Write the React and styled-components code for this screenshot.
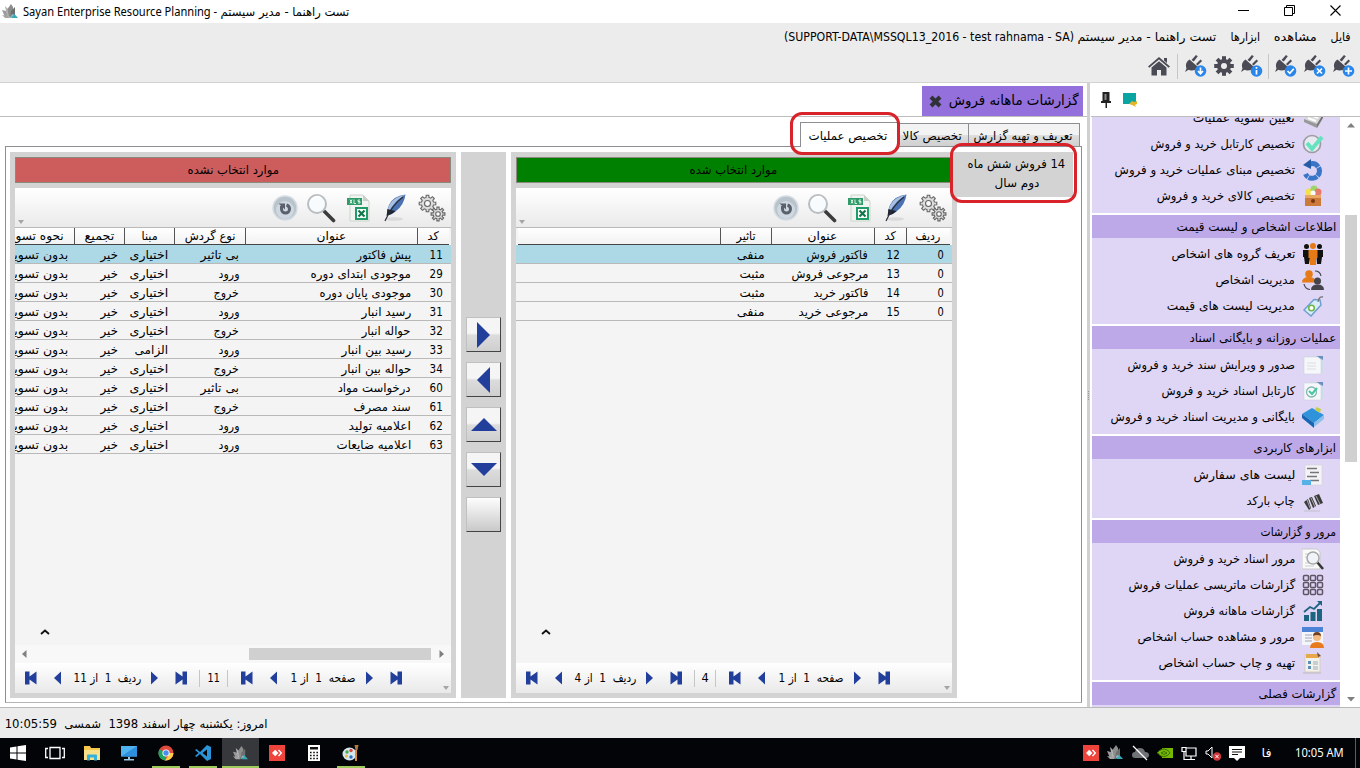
import React, { useLayoutEffect, useRef, useState } from "react";
import styled, { createGlobalStyle, css } from "styled-components";

const Global = createGlobalStyle`
  * { box-sizing: border-box; }
  body { margin: 0; overflow: hidden; background: #fff; }
`;

const App_ = styled.div`
  width: 1360px; height: 768px; position: relative; overflow: hidden;
  display: flex; flex-direction: column; color: #000;
  font-family: "DejaVu Sans Condensed", "DejaVu Sans", sans-serif;
  font-stretch: condensed; font-size: 12px; line-height: 16px;
`;

const FitBox = styled.span`
  display: inline-block; flex: none; white-space: nowrap; height: 16px;
  direction: ${(p) => p.$dir};
  ${(p) => p.$font && css`font-family: ${p.$font};`}
`;
const FitInner = styled.span`
  display: inline-block; white-space: pre;
  transform-origin: ${(p) => (p.$dir === "rtl" ? "right" : "left")} center;
`;
function Fit({ w, dir = "rtl", font, children }) {
  const ref = useRef(null);
  const [scale, setScale] = useState(1);
  useLayoutEffect(() => {
    const natural = ref.current.offsetWidth;
    if (natural) setScale((w + 0.4) / natural);
  }, [w, children]);
  return (
    <FitBox $dir={dir} $font={font} style={{ width: w }}>
      <FitInner ref={ref} $dir={dir} style={{ transform: `scaleX(${scale})` }}>{children}</FitInner>
    </FitBox>
  );
}
const LATIN = '"Noto Sans", "DejaVu Sans", sans-serif';

/* ---------- title bar ---------- */
const TitleBar = styled.header`
  height: 23px; flex: none; display: flex; align-items: center; background: #fff; padding: 0 19px 0 2px; gap: 5px;
`;
const Spacer = styled.div`flex: 1;`;
const WinControls = styled.div`display: flex; gap: 35px; align-items: center; margin-top: -3px;`;
const TitleText = styled.div`display: flex; gap: 4px; margin-top: 1px;`;

const LotusIcon = ({ size = 16 }) => (
  <svg width={size} height={size} viewBox="0 0 16 16">
    <path d="M0 6l4 1 3 7-4-1z" fill="#9a9a9a" />
    <path d="M3 2l4 4 1 8-3-2z" fill="#b0b0b0" />
    <path d="M9 0L5.500 5l1.500 8 4-2V3z" fill="#8d8d8d" />
    <path d="M13 3l-4 4-1 7 5-3z" fill="#6f6f6f" />
    <path d="M0 11l5 1 3 2-5 0z" fill="#a5a5a5" />
    <path d="M9 14l3-4.500 4 4.500z" fill="#35aab8" />
    <path d="M8 14l2-4 2 1z" fill="#9ab8bc" />
  </svg>
);

/* ---------- menu ---------- */
const Ribbon = styled.div`
  height: 60px; flex: none; background: #ececec; border-bottom: 1px solid #d2d2d2;
`;
const MenuRow = styled.nav`
  height: 28px; display: flex; flex-direction: row; direction: rtl; align-items: center; padding-right: 9px; gap: 14px;
`;
const MenuCaption = styled.div`display: flex; direction: rtl; gap: 4px; margin-right: 1px;`;
const Tools = styled.div`
  height: 30px; display: flex; align-items: center; justify-content: flex-end; padding-right: 5px; gap: 7px;
`;
const Divider = styled.i`
  width: 1px; height: ${(p) => p.$h || 25}px; background: ${(p) => p.$c || "#c6c6c6"}; flex: none; margin: ${(p) => p.$m || "0"};
`;

const Plug = ({ kind }) => (
  <svg width="22" height="23" viewBox="0 0 22 23">
    <g fill="#4b4b55">
      <path d="M4.500 4.500L13 12Q11 15.500 6.500 15.500q-2 0-3-.8L0 17l1.500-3.500Q-.5 8 4.500 4.500z" />
      <path d="M6.500 5L11 0l1.800 1.300-4 5.200zM11 9l4.500-4.500 1.600 1.600-4.600 4.400z" />
    </g>
    <circle cx="15.500" cy="16" r="5.800" fill="#2b86ea" />
    <g stroke="#fff" strokeWidth="1.700" fill="none">
      {kind === "plus" && <path d="M15.500 12.500v7M12 16h7" />}
      {kind === "x" && <path d="M13 13.500l5 5M18 13.500l-5 5" />}
      {kind === "check" && <path d="M12.500 16l2.300 2.300 4-4.600" />}
      {kind === "info" && <path d="M15.500 15v4.500M15.500 12v1.800" />}
      {kind === "down" && <path d="M15.500 12.500v6M13 16l2.500 2.800L18 16" />}
    </g>
  </svg>
);
const HomeIcon = () => (
  <svg width="22" height="20" viewBox="0 0 22 20" fill="#4b4b55">
    <path d="M0 10.500L11 1l11 9.500-1.300 1.300L11 3.600 1.300 11.800z" />
    <path d="M3.500 11.500L11 5.200l7.500 6.300V19.500h-5.500v-5.500H9v5.500H3.500zM16 2h3v5l-3-2.500z" />
  </svg>
);
const GearIcon = () => (
  <svg width="20" height="20" viewBox="-10 -10 20 20">
    {[0, 45, 90, 135].map((a) => (
      <rect key={a} x="-2" y="-9.800" width="4" height="19.600" fill="#4b4b55" transform={`rotate(${a})`} />
    ))}
    <circle r="7" fill="#4b4b55" /><circle r="3" fill="#ececec" />
  </svg>
);

/* ---------- main area ---------- */
const Body = styled.div`flex: none; height: 625px; display: flex; border-bottom: 1px solid #b9b9b9;`;
const Work = styled.main`width: 1087px; display: flex; flex-direction: column;`;
const DocTabs = styled.div`
  height: 34px; flex: none; display: flex; justify-content: flex-end; align-items: flex-end;
  border-bottom: 1px solid #bdbdbd; padding-right: 4px;
`;
const DocTab = styled.div`
  width: 161px; height: 30px; background: #9370db; display: flex; align-items: center; justify-content: flex-end;
  gap: 7px; padding: 0 4px 3px 0; font-size: 14px;
`;
const CloseGlyph = styled.svg`margin-top: 3px;`;
const PageTabs = styled.div`
  height: 29px; flex: none; display: flex; direction: rtl; align-items: flex-end; padding-right: 7px;
`;
const PageTab = styled.div`
  width: ${(p) => p.$w}px; height: ${(p) => (p.$on ? 25 : 23)}px; border: 1px solid #8c8e94; border-bottom: 0;
  margin-left: ${(p) => (p.$on ? 0 : -1)}px;
  background: ${(p) => (p.$on ? "#fff" : "linear-gradient(#f3f3f3 0 48%, #dedede 52%, #cfcfcf)")};
  display: flex; align-items: center; justify-content: center; position: relative; top: ${(p) => (p.$on ? 1 : 0)}px;
  padding: 1px 2px 0 0;
`;
const Page = styled.section`
  margin: 0 5px 4px 5px; flex: 1; border: 1px solid #8c8e94; border-bottom-color: #b5b5b5;
  padding: 5px 4px 4px; display: flex; gap: 5px; background: #fff;
`;
const Panel = styled.div`
  width: 446px; background: #d3d3d3; padding: 5px; display: flex; flex-direction: column; flex: none;
`;
const PanelTitle = styled.div`
  height: 26px; flex: none; margin-bottom: 5px; border: 1px solid #8a8a7e; background: ${(p) => p.$bg};
  display: flex; align-items: center; justify-content: center;
`;
const PanelTools = styled.div`
  height: 40px; flex: none; background: linear-gradient(#fff, #eaeaea); border-bottom: 1px solid #b9b9b9;
  display: flex; align-items: center; justify-content: flex-end; padding: 0 5px 0 3px;
`;
const Tool = styled.span`display: flex; margin-left: ${(p) => p.$m}px;`;
const SmallArrow = styled.i`
  width: 0; height: 0; border: 3px solid transparent; border-top: 4px solid #a5a5a5; border-bottom: 0;
  align-self: flex-end; margin: ${(p) => p.$m || "0 auto 3px 0"};
`;
const Grid = styled.div`flex: 1; background: #f4f4f4; display: flex; flex-direction: column; min-height: 0;`;
const HeadRow = styled.div`
  height: 17px; flex: none; display: flex; direction: rtl; margin: 0 2px 0 ${(p) => p.$ml}px;
  background: linear-gradient(#fff, #f2f2f2); border-bottom: 1px solid #454545; overflow: hidden;
`;
const HeadCell = styled.div`
  ${(p) => (p.$w ? css`width: ${p.$w}px; border-left: 1px solid #555;` : css`flex: 1;`)}
  flex-shrink: 0; height: 16px; display: flex; justify-content: ${(p) => (p.$w ? "center" : "flex-start")};
  padding-right: ${(p) => (p.$w ? 0 : 10)}px; min-width: 0;
`;
const Row = styled.div`
  height: 19px; flex: none; display: flex; direction: rtl; align-items: center; overflow: hidden;
  border-bottom: 1px solid #b9b9b9; background: ${(p) => (p.$on ? "#add8e6" : "transparent")};
`;
const Cell = styled.div`
  ${(p) => (p.$w ? css`width: ${p.$w}px;` : css`flex: 1;`)}
  flex-shrink: 0; min-width: 0; display: flex; padding-right: ${(p) => (p.$first ? 8 : 6)}px;
  padding-top: 1px;
`;
const Up = styled.svg`margin: auto 0 ${(p) => p.$b}px 25px; flex: none;`;
const HScroll = styled.div`
  height: 18px; flex: none; background: #f8f8f8; display: flex; align-items: center; padding: 0 7px;
`;
const HThumb = styled.div`width: 182px; height: 12px; background: #d0d0d0; margin: 0 8px 0 auto;`;
const Pager = styled.div`
  height: 30px; flex: none; background: linear-gradient(#fff, #e9e9e9); display: flex; align-items: center;
  padding-left: 10px;
`;
const PagerItem = styled.span`display: flex; margin: 0 ${(p) => p.$r}px 0 ${(p) => p.$l || 0}px;`;
const Mover = styled.div`
  width: 45px; background: #d3d3d3; display: flex; flex-direction: column; align-items: center;
  padding-top: 165px; gap: 10px; flex: none;
`;
const MoveButton = styled.button`
  width: 35px; height: 35px; padding: 0; border: 1px solid #c0c0c0; border-right-color: #444; border-bottom-color: #444;
  background: linear-gradient(${(p) => (p.$blank ? "#fdfdfd, #c9c9c9" : "#f5f5f5 0 46%, #dcdcdc 52%, #cfcfcf")});
  display: flex; align-items: center; justify-content: center;
`;
const ReportItem = styled.div`
  width: 116px; flex: none; height: 45px; margin-left: -5px; background: #d3d3d3; display: flex; flex-direction: column;
  align-items: flex-end; gap: 3px; padding: 4px 8px 0 0; direction: ltr;
`;
const SecondLine = styled.span`display: flex; margin-right: 26px;`;

const BLUE = "#223f9b";
const Nav = ({ kind }) => {
  const edge = kind === "first" || kind === "last";
  return (
    <svg width={edge ? 12 : 8} height="14" viewBox={edge ? "0 0 12 14" : "0 0 8 14"} fill={BLUE}>
      {kind === "first" && <path d="M0 .5h4.500v5L11.500 .5v13L4.500 8.500v5H0z" />}
      {kind === "last" && <path d="M12 .5H7.500v5L.5 .5v13l7-5v5H12z" />}
      {kind === "prev" && <path d="M7 .5v13L0 7z" />}
      {kind === "next" && <path d="M1 .5v13L8 7z" />}
    </svg>
  );
};

const Cog = ({ x, y, r, n }) => {
  const pts = [];
  for (let i = 0; i < n; i++) {
    [[-0.3, r], [-0.2, r + 2.2], [0.2, r + 2.2], [0.3, r]].forEach(([o, d]) => {
      const a = ((i + o) * 2 * Math.PI) / n;
      pts.push(`${(Math.cos(a) * d).toFixed(2)},${(Math.sin(a) * d).toFixed(2)}`);
    });
  }
  return (
    <g transform={`translate(${x} ${y})`} stroke="#666" strokeWidth="1.100">
      <polygon points={pts.join(" ")} fill="#dcdcdc" />
      <circle r={r * 0.48} fill="#fafafa" />
    </g>
  );
};
const PanelToolbar = () => (
  <PanelTools>
    <SmallArrow />
    <Tool>
      <svg width="26" height="26" viewBox="0 0 26 26">
        <circle cx="13" cy="13" r="12" fill="#b9c3cc" stroke="#d5dce2" strokeWidth="1.500" />
        <circle cx="13" cy="15" r="9" fill="#cfd8e0" />
        <path d="M9.500 11v3a4 4 0 0 0 8 0q0-3-3-4" fill="none" stroke="#59616c" strokeWidth="3" />
        <path d="M6.500 8.500h6.500v6z" fill="#59616c" />
      </svg>
    </Tool>
    <Tool $m={8}>
      <svg width="30" height="30" viewBox="0 0 30 30">
        <path d="M18.500 18.500l9 9" stroke="#3b3b3b" strokeWidth="3.600" strokeLinecap="round" />
        <circle cx="11" cy="11" r="9" fill="#f8fbfd" stroke="#b9bec2" strokeWidth="2" />
        <path d="M6 7q4-5 9-2" stroke="#fff" strokeWidth="2" fill="none" />
      </svg>
    </Tool>
    <Tool $m={11}>
      <svg width="24" height="28" viewBox="0 0 24 28">
        <path d="M3 1h13l6 6v20H3z" fill="#f1f4f1" stroke="#cdd4cd" />
        <path d="M16 1v6h6z" fill="#c9cfc9" />
        <rect x="0" y="4" width="15" height="7" fill="#2f9b68" />
        <path d="M3 5.500l2 4m0-4l-2 4M7 5.500v4h2M13 6h-2v1.500h2v1.500h-2" stroke="#d9f0e3" fill="none" />
        <rect x="8" y="13" width="13" height="13" fill="#1f9c68" />
        <rect x="10" y="15" width="9" height="9" fill="#fff" />
        <path d="M11.500 16.500l6 6M17.500 16.500l-6 6" stroke="#13764a" strokeWidth="2.200" />
      </svg>
    </Tool>
    <Tool $m={12}>
      <svg width="24" height="30" viewBox="0 0 24 30">
        <ellipse cx="11" cy="26" rx="9" ry="1.800" fill="#dadada" />
        <path d="M22.500 1.500Q10 3 6 12q-2.500 5-2 10 5 0 9-4 8-6 9.500-16.500z" fill="#4a72b2" />
        <path d="M22 2Q12 7 5 20q-1-4 2-9Q11 4 22 2z" fill="#a9c0e0" />
        <path d="M4.500 16Q4 20 3.500 23q5-1 9-5-5-1-8-2z" fill="#20242e" />
        <path d="M20 4Q9 12 2 28" stroke="#2a2f3c" fill="none" strokeWidth="1.200" />
      </svg>
    </Tool>
    <Tool $m={11}>
      <svg width="28" height="28" viewBox="0 0 28 28">
        <Cog x={9.5} y={9.5} r={6.2} n={8} />
        <Cog x={20} y={20} r={4.8} n={8} />
      </svg>
    </Tool>
  </PanelTools>
);

const UpMark = ({ b }) => (
  <Up $b={b} width="10" height="6" viewBox="0 0 10 6"><path d="M1 5l4-3.500L9 5" fill="none" stroke="#111" strokeWidth="1.800" /></Up>
);

function DataGrid({ columns, rows, ml, markBottom }) {
  return (
    <Grid>
      <HeadRow $ml={ml}>
        {columns.map((c, i) => (
          <HeadCell key={i} $w={c.w && (i === 0 ? c.w - 2 : c.w)}>{c.t && <Fit w={c.tw}>{c.t}</Fit>}</HeadCell>
        ))}
      </HeadRow>
      {rows.map((r, ri) => (
        <Row key={ri} $on={ri === 0}>
          {r.map(([t, w], ci) => (
            <Cell key={ci} $w={columns[ci].w} $first={ci === 0}>{t && <Fit w={w}>{t}</Fit>}</Cell>
          ))}
        </Row>
      ))}
      <UpMark b={markBottom} />
    </Grid>
  );
}

const Y = ["اختیاری", 38], N = ["خیر", 17], B = ["بدون تسویه", 60];
const IN = ["ورود", 20], OUT = ["خروج", 25], NONE = ["بی تاثیر", 38];
const leftColumns = [
  { t: "کد", tw: 11, w: 34 }, { t: "عنوان", tw: 29, w: 172 }, { t: "نوع گردش", tw: 51, w: 71 },
  { t: "مبنا", tw: 16, w: 50 }, { t: "تجمیع", tw: 29, w: 50 }, { t: "نحوه تسویه", tw: 58 },
];
const leftRows = [
  ["11", "پیش فاکتور", 54, NONE], ["29", "موجودی ابتدای دوره", 100, IN], ["30", "موجودی پایان دوره", 91, OUT],
  ["31", "رسید انبار", 49, IN], ["32", "حواله انبار", 49, OUT], ["33", "رسید بین انبار", 69, IN, ["الزامی", 33]],
  ["34", "حواله بین انبار", 69, OUT], ["60", "درخواست مواد", 73, NONE], ["61", "سند مصرف", 57, OUT],
  ["62", "اعلامیه تولید", 62, IN], ["63", "اعلامیه ضایعات", 74, IN],
].map(([c, t, w, k, y]) => [[c, 13], [t, w], k, y || Y, N, B]);
const rightColumns = [
  { t: "ردیف", tw: 24, w: 46 }, { t: "کد", tw: 11, w: 32 }, { t: "عنوان", tw: 29, w: 103 }, { t: "تاثیر", tw: 19, w: 51 }, {},
];
const rightRows = [
  [["0", 6], ["12", 13], ["فاکتور فروش", 61], ["منفی", 28], ["", 0]],
  [["0", 6], ["13", 13], ["مرجوعی فروش", 76], ["مثبت", 25], ["", 0]],
  [["0", 6], ["14", 13], ["فاکتور خرید", 54], ["مثبت", 25], ["", 0]],
  [["0", 6], ["15", 13], ["مرجوعی خرید", 69], ["منفی", 28], ["", 0]],
];

function PagerBar({ total, rowText, rowW, totalW, totalGap }) {
  return (
    <Pager>
      <PagerItem $r={17}><Nav kind="first" /></PagerItem>
      <PagerItem $r={12}><Nav kind="prev" /></PagerItem>
      <PagerItem $r={9}><Fit w={rowW}>{rowText}</Fit></PagerItem>
      <PagerItem $r={17}><Nav kind="next" /></PagerItem>
      <PagerItem $r={12}><Nav kind="last" /></PagerItem>
      <Divider $h={17} />
      <PagerItem $l={totalGap} $r={totalGap - 1}><Fit w={totalW}>{total}</Fit></PagerItem>
      <Divider $h={17} />
      <PagerItem $l={13} $r={17}><Nav kind="first" /></PagerItem>
      <PagerItem $r={12}><Nav kind="prev" /></PagerItem>
      <PagerItem $r={10}><Fit w={65}>{"صفحه  1  از 1"}</Fit></PagerItem>
      <PagerItem $r={17}><Nav kind="next" /></PagerItem>
      <PagerItem $r={0}><Nav kind="last" /></PagerItem>
      <SmallArrow $m="0 2px 3px auto" />
    </Pager>
  );
}

/* ---------- sidebar ---------- */
const Splitter = styled.div`width: 4px; background: #d0d0d0; border-right: 1px solid #fff; display: flex; align-items: center;`;
const Grip = styled.i`width: 1px; height: 9px; border-left: 1px dotted #999; margin-left: 1px;`;
const Side = styled.aside`flex: 1; display: flex; flex-direction: column; min-height: 0;`;
const SideHead = styled.div`
  height: 34px; flex: none; border-bottom: 1px solid #bdbdbd; display: flex; align-items: center; gap: 12px; padding-left: 10px;
`;
const SideBody = styled.div`flex: 1; display: flex; min-height: 0; padding-left: 1px;`;
const Groups = styled.div`width: 248px; overflow: hidden; display: flex; flex-direction: column;`;
const Group = styled.div`flex: none; margin-top: ${(p) => p.$mt ?? 2}px;`;
const GroupHead = styled.div`
  height: 23px; background: #bea9e8; direction: rtl; display: flex; align-items: center; padding: 1px 4px 0 0;
`;
const GroupItems = styled.div`background: #dfd5f4; padding: 3px 0 4.3px;`;
const SideItem = styled.div`
  height: 26px; direction: rtl; display: flex; align-items: center; padding-right: 16px; gap: 7px;
`;
const VScroll = styled.div`
  width: 20px; display: flex; flex-direction: column; align-items: center; padding: 6px 0 5px 2px; flex: none;
`;
const VThumb = styled.div`width: 12px; height: 247px; background: #d0d0d0; margin-top: 87px;`;

const pic = {
  keys: <><path d="M2 12L8 4l13 3-6 10z" fill="#d6d6d6" /><path d="M2 12l13 5v4L2 15z" fill="#999" /><path d="M6 11l8 3M8 8l8 3" stroke="#fff" strokeWidth="2" /><path d="M15 17l6-10v4l-6 10z" fill="#777" /></>,
  check: <><circle cx="10" cy="11" r="8.500" fill="#e9e9f1" stroke="#9c9ca4" strokeWidth="1.700" /><path d="M5 10l5 6L20 4" stroke="#64e3c0" strokeWidth="4" fill="none" /></>,
  cycle: <><path d="M8 5a7.300 7.300 0 1 1-4.500 10" stroke="#3a76c8" strokeWidth="5" fill="none" strokeDasharray="9 .7" /><path d="M1 6L9 0v10z" fill="#245ca8" /></>,
  box: <><circle cx="7" cy="7" r="3.500" fill="#f4e04d" /><circle cx="12" cy="4" r="3.500" fill="#9cd56a" /><circle cx="16" cy="7" r="3.500" fill="#e67b6c" /><circle cx="11" cy="8" r="2.500" fill="#fff" /><rect x="3" y="10" width="16" height="11" fill="#cc7a3c" /><rect x="3" y="10" width="16" height="3" fill="#e9a764" /><circle cx="11" cy="16" r="2" fill="#7c3513" /></>,
  people: <><g fill="#111"><circle cx="4.500" cy="3.500" r="2.500" /><path d="M1 7h7v7l-1 7H3l-1-7H1z" /><circle cx="17.500" cy="3.500" r="2.500" /><path d="M14 7h7v7h-1l-1 7h-4z" /></g><g fill="#e67a17"><circle cx="11" cy="3" r="3" /><path d="M6.500 7h9v8h-1.500v7H8v-7H6.500z" /></g></>,
  swap: <><g fill="#e67a17"><circle cx="7" cy="5" r="3.800" /><path d="M0 13.500q0-5.500 7-5.500t6 5.500z" /></g><g fill="#44444c"><circle cx="15.500" cy="12" r="3.500" /><path d="M9 21q0-5.500 6.500-5.500T22 21z" /></g><path d="M13 2q5 0 6 5M2 15q1 5 6 5.500" stroke="#44444c" fill="none" strokeWidth="1.200" /></>,
  tag: <><path d="M2 15L12 4.500l6 .5 1 5-10 11z" fill="#d9ecfa" stroke="#6e9fd0" strokeWidth="1.500" /><circle cx="9.500" cy="13" r="2.800" fill="#fff" stroke="#69b644" strokeWidth="1.500" /><path d="M16 7q1-6 5-5" stroke="#777" fill="none" strokeWidth="1.300" /></>,
  docs: <><path d="M6 2h13l2 3v14H6z" fill="#cddcec" /><path d="M14 2h7v4z" fill="#6c90bd" /><path d="M2 3h14l3 3v14H2z" fill="#f5f7fa" stroke="#ccd3dc" strokeWidth=".6" /><path d="M5 9h9M5 12h9M5 15h9" stroke="#ddd" /></>,
  docCheck: <><path d="M6 2h13l2 3v14H6z" fill="#cddcec" /><path d="M14 2h7v4z" fill="#6c90bd" /><path d="M2 3h14l3 3v14H2z" fill="#f5f7fa" stroke="#ccd3dc" strokeWidth=".6" /><circle cx="9.500" cy="12" r="5" fill="none" stroke="#83b6b0" strokeWidth="1.300" /><path d="M7 11l3 3 5-6" fill="none" stroke="#45c79f" strokeWidth="2" /></>,
  book: <><path d="M0 8L10 2l12 7-10 8z" fill="#2f93dc" /><path d="M0 8l12 9v5L0 12z" fill="#1666b4" /><path d="M12 17l10-8v4l-10 8z" fill="#8cc0ea" /><path d="M14 1l5 2-1 4-5-3z" fill="#c4cf4a" /></>,
  list: <><path d="M3 1h17v20H3z" fill="#f4f4f6" stroke="#d4d4dc" strokeWidth=".7" /><path d="M5 4.500h10M8 8.500h9M5 12.500h10M8 16.500h9" stroke="#75757b" strokeWidth="1.700" /><rect x="0" y="16" width="9" height="5" fill="#58b1e6" /></>,
  barcode: <><path d="M2 12l4-3 3 9-2 2zM7 8l3-1 4 9-3 2zM12 6l5-2 4 9-5 2z" fill="#3a3a3a" /><path d="M9 8l4 9M14 6l4 8M5 10l3 8" stroke="#aaa" /><path d="M2 21h16" stroke="#c4bfce" /></>,
  lens: <><path d="M0 1h15l3 3v17H0z" fill="#fafafa" stroke="#c9c9c9" /><path d="M3 6h9M3 9h9M3 15h9M3 18h9" stroke="#ccc" /><path d="M15 14l6 7" stroke="#333" strokeWidth="2.500" /><circle cx="11" cy="10" r="6" fill="#f0f4f8" stroke="#a6a6a6" strokeWidth="1.500" /></>,
  matrix: <g fill="none" stroke="#5e5666" strokeWidth="1.500">{[1.5, 8.5, 15.5].map((y) => [1.5, 8.5, 15.5].map((x) => <rect key={x + "-" + y} x={x} y={y} width="5" height="5" rx="1" />))}</g>,
  chart: <g fill="#1c6480"><path d="M2 15h5v6H2zM8.500 12h5v9h-5zM15 9h5v12h-5z" /><path d="M2 12l6-5 4 2 6-6" stroke="#1c6480" strokeWidth="1.800" fill="none" /><path d="M15 1h5v5z" /></g>,
  account: <><rect x="0" y="1" width="21" height="18" fill="#f3f5fa" /><rect x="0" y="1" width="21" height="5" fill="#4d83d6" /><path d="M3 9h7M3 12h7M3 15h7" stroke="#a2a7b4" /><circle cx="15" cy="11" r="4" fill="#f2bb82" /><path d="M11 10q0-4 4-4t4 4q-4-2-8 0z" fill="#704020" /><path d="M8 22q0-6 7-6t7 6z" fill="#e77b1d" /></>,
  print: <><path d="M3 3h15v17H3z" fill="#f3f1ea" stroke="#d2cfc5" /><path d="M4 2h13v4H4z" fill="#e7a94b" /><path d="M15 0l4 4-3 1z" fill="#6e5044" /><path d="M6 9h3v3H6zM6 14h3v3H6z" fill="#5c90b4" /><path d="M11 10h5M11 12h5M11 15h5M11 17h5" stroke="#98afbb" /><path d="M1 21h18" stroke="#bbb" /></>,
};
const Pic = ({ n }) => <svg width="22" height="22" viewBox="0 0 22 22">{pic[n]}</svg>;

const groups = [
  { items: [["keys", "تعیین تسویه عملیات", 102], ["check", "تخصیص کارتابل خرید و فروش", 144], ["cycle", "تخصیص مبنای عملیات خرید و فروش", 180], ["box", "تخصیص کالای خرید و فروش", 138]] },
  { head: ["اطلاعات اشخاص و لیست قیمت", 159], items: [["people", "تعریف گروه های اشخاص", 123], ["swap", "مدیریت اشخاص", 79], ["tag", "مدیریت لیست های قیمت", 128]] },
  { head: ["عملیات روزانه و بایگانی اسناد", 146], items: [["docs", "صدور و ویرایش سند خرید و فروش", 167], ["docCheck", "کارتابل اسناد خرید و فروش", 133], ["book", "بایگانی و مدیریت اسناد خرید و فروش", 184]] },
  { head: ["ابزارهای کاربردی", 82], items: [["list", "لیست های سفارش", 101], ["barcode", "چاپ بارکد", 48]] },
  { head: ["مرور و گزارشات", 75], items: [["lens", "مرور اسناد خرید و فروش", 121], ["matrix", "گزارشات ماتریسی عملیات فروش", 166], ["chart", "گزارشات ماهانه فروش", 111], ["account", "مرور و مشاهده حساب اشخاص", 157], ["print", "تهیه و چاپ حساب اشخاص", 136]] },
  { head: ["گزارشات فصلی", 77], items: [] },
];

/* ---------- status + taskbar ---------- */
const Status = styled.div`height: 30px; flex: none; background: #ececec; display: flex; align-items: center; padding: 1px 0 0 5px;`;
const Taskbar = styled.footer`height: 30px; flex: none; background: #020408; display: flex; color: #fff;`;
const TaskList = styled.div`display: flex; margin-left: -0.4px;`;
const TaskButton = styled.div`
  width: 37px; height: 30px; display: flex; align-items: center; justify-content: center; flex: none;
  background: ${(p) => (p.$on ? "#37383c" : "none")};
`;
const TaskInner = styled.div`
  width: ${(p) => (p.$full ? 37 : 28)}px; height: 30px; display: flex; align-items: center; justify-content: center;
  border-bottom: 2px solid ${(p) => (p.$run ? "#9ccb5c" : "transparent")}; padding-top: 2px;
`;
const Tray = styled.div`display: flex; align-items: center; gap: 8px; padding-right: 4px;`;
const Clock = styled.div`display: flex; margin: -1px 12px 0 16px;`;
const Lang = styled.div`display: flex; margin-left: 9px;`;

const AnyDesk = () => (
  <svg width="16" height="16" viewBox="0 0 16 16"><rect width="16" height="16" fill="#ef443b" /><path d="M3 8l3.200-3.200L9.400 8l-3.200 3.200z" fill="#fff" /><path d="M9.500 5L12.300 8l-2.800 3" stroke="#fff" fill="none" strokeWidth="1.400" /></svg>
);
const S = ({ children, w = 18 }) => <svg width={w} height="18" viewBox={`0 0 ${w} 18`}>{children}</svg>;
const tasks = [
  { icon: <S><path d="M1 3.500l6.500-1v6H1zM8.500 2.300L17 1v7.500H8.500zM1 9.500h6.500v6L1 14.500zM8.500 9.500H17V17l-8.500-1.300z" fill="#fff" /></S> },
  { icon: <S w={20}><path d="M5 3.500h10v11H5zM3 4.500H.7v9H3M17 4.500h2.300v9H17" fill="none" stroke="#fff" strokeWidth="1.300" /></S> },
  { icon: <S><path d="M1 2h6l1 2h9v12H1z" fill="#f5c84c" /><path d="M1 6h16v10H1z" fill="#fbe08a" /><path d="M4 16.500v-5q0-1 1-1h8q1 0 1 1v5h-3v-3H7v3z" fill="#33b1dd" /></S> },
  { icon: <S><rect x="1" y="2" width="16" height="10.500" fill="#4fb3f2" /><path d="M1 12.500L17 2v10.500z" fill="#2e8fdc" /><path d="M8 13h2v2H8zM4 15h10v1.500H4z" fill="#9cc8e6" /></S> },
  { run: 1, icon: <S><circle cx="9" cy="9" r="7.500" fill="#dd4b3e" /><path d="M9 9L2.500 5.200A7.500 7.500 0 0 0 9 16.500z" fill="#1da462" /><path d="M9 9h7.500A7.500 7.500 0 0 1 8 16.400l4-6z" fill="#ffcd46" /><circle cx="9" cy="9" r="3.600" fill="#fff" /><circle cx="9" cy="9" r="2.700" fill="#4b8bf4" /></S> },
  { run: 1, icon: <S><path d="M13 1l4 2v12l-4 2-7-7-3.500 3L1 12l3.500-3L1 6l1.500-1L6 8zM13 5.500L8.500 9l4.500 3.500z" fill="#2b93d8" fillRule="evenodd" /></S> },
  { run: 1, on: 1, icon: <LotusIcon size={15} /> },
  { icon: <AnyDesk /> },
  { icon: <S><rect x="3" y="1" width="12" height="16" fill="#fff" /><path d="M5 3h8v2.500H5z" fill="#111" /><path d="M5 8.500h8M5 11.500h8M5 14.500h8" stroke="#111" strokeWidth="1.600" strokeDasharray="1.600 1.600" /></S> },
  { run: 1, icon: <S><ellipse cx="7.500" cy="10" rx="7" ry="6.500" fill="#d5e6ef" /><circle cx="5" cy="8" r="1.700" fill="#4aa84a" /><circle cx="9" cy="6.500" r="1.700" fill="#d9483b" /><circle cx="4.500" cy="12" r="1.500" fill="#e9b93a" /><circle cx="9" cy="13" r="1.700" fill="#2e6fc0" /><path d="M14 6v11" stroke="#d98a3c" strokeWidth="2" /><path d="M12.500 1h4l-1 5h-2z" fill="#b0793e" /></S> },
];

/* ---------- highlight rings ---------- */
const Ring = styled.div`
  position: absolute; left: ${(p) => p.$x}px; top: ${(p) => p.$y}px; width: ${(p) => p.$w}px; height: ${(p) => p.$h}px;
  border: 3px solid #d8232a; border-radius: 12px;
`;

export default function App() {
  return (
    <App_>
      <Global />
      <TitleBar>
        <LotusIcon />
        <TitleText>
          <Fit w={194} dir="ltr" font={LATIN}>{"Sayan Enterprise Resource Planning -"}</Fit>
          <Fit w={128}>تست راهنما - مدیر سیستم</Fit>
        </TitleText>
        <Spacer />
        <WinControls>
          <svg width="11" height="11"><path d="M0 5.500h11" stroke="#000" /></svg>
          <svg width="11" height="11" fill="none" stroke="#000"><path d="M.5 2.500h8v8h-8zM2.500 2.500v-2h8v8h-2" /></svg>
          <svg width="11" height="11"><path d="M.5.500l10 10M10.500.500l-10 10" stroke="#000" strokeWidth="1.100" /></svg>
        </WinControls>
      </TitleBar>

      <Ribbon>
        <MenuRow>
          <Fit w={20}>فایل</Fit>
          <Fit w={43}>مشاهده</Fit>
          <Fit w={29}>ابزارها</Fit>
          <MenuCaption>
            <Fit w={138}>تست راهنما - مدیر سیستم</Fit>
            <Fit w={290} dir="ltr">{"(SUPPORT-DATA\\MSSQL13_2016 - test rahnama - SA)"}</Fit>
          </MenuCaption>
        </MenuRow>
        <Tools>
          <HomeIcon />
          <Divider />
          <Plug kind="down" />
          <GearIcon />
          <Plug kind="info" />
          <Divider $m="0 -1px 0 -2px" />
          <Plug kind="check" />
          <Plug kind="x" />
          <Plug kind="plus" />
        </Tools>
      </Ribbon>

      <Body>
        <Work>
          <DocTabs>
            <DocTab>
              <CloseGlyph width="13" height="13" viewBox="0 0 13 13"><path d="M2 2l9 9M11 2l-9 9" stroke="#303038" strokeWidth="4" /></CloseGlyph>
              <Fit w={130}>گزارشات ماهانه فروش</Fit>
            </DocTab>
          </DocTabs>
          <PageTabs>
            <PageTab $w={112}><Fit w={98}>تعریف و تهیه گزارش</Fit></PageTab>
            <PageTab $w={71}><Fit w={59}>تخصیص کالا</Fit></PageTab>
            <PageTab $w={99} $on><Fit w={78}>تخصیص عملیات</Fit></PageTab>
          </PageTabs>
          <Page>
            <Panel>
              <PanelTitle $bg="#cd5c5c"><Fit w={91}>موارد انتخاب نشده</Fit></PanelTitle>
              <PanelToolbar />
              <DataGrid columns={leftColumns} rows={leftRows} ml={0} markBottom={10} />
              <HScroll>
                <svg width="5" height="8"><path d="M4.500 0v8L0 4z" fill="#808080" /></svg>
                <HThumb />
                <svg width="5" height="8"><path d="M.5 0v8L5 4z" fill="#808080" /></svg>
              </HScroll>
              <PagerBar total="11" totalW={12} totalGap={8} rowText={"ردیف  1  از 11"} rowW={67} />
            </Panel>
            <Mover>
              <MoveButton><svg width="14" height="26"><path d="M0 0v26L13 13z" fill={BLUE} /></svg></MoveButton>
              <MoveButton><svg width="14" height="26"><path d="M13 0v26L0 13z" fill={BLUE} /></svg></MoveButton>
              <MoveButton><svg width="26" height="14"><path d="M0 13h26L13 0z" fill={BLUE} /></svg></MoveButton>
              <MoveButton><svg width="26" height="14"><path d="M0 0h26L13 13z" fill={BLUE} /></svg></MoveButton>
              <MoveButton $blank />
            </Mover>
            <Panel>
              <PanelTitle $bg="#008000"><Fit w={87}>موارد انتخاب شده</Fit></PanelTitle>
              <PanelToolbar />
              <DataGrid columns={rightColumns} rows={rightRows} ml={2} markBottom={28} />
              <PagerBar total="4" totalW={7} totalGap={7} rowText={"ردیف  1  از 4"} rowW={61} />
            </Panel>
            <ReportItem>
              <Fit w={97}>14 فروش شش ماه</Fit>
              <SecondLine><Fit w={44}>دوم سال</Fit></SecondLine>
            </ReportItem>
          </Page>
        </Work>
        <Splitter><Grip /></Splitter>
        <Side>
          <SideHead>
            <svg width="10" height="16" viewBox="0 0 10 16"><path d="M1.500 0h7v9H10v2H6v5H4.500v-5H0V9h1.500z" fill="#222" /><path d="M3.500 2h2v6h-2z" fill="#8a8a8a" /></svg>
            <svg width="15" height="15" viewBox="0 0 15 15"><path d="M0 1h13v11H0z" fill="#0aa5a0" /><path d="M6 12l3-3 2 1 3-1v3l-2 1 1 2-4-2z" fill="#e4b429" /></svg>
          </SideHead>
          <SideBody>
            <Groups>
              {groups.map((g, i) => (
                <Group key={i} $mt={i === 0 ? -15 : 2}>
                  {g.head && <GroupHead><Fit w={g.head[1]}>{g.head[0]}</Fit></GroupHead>}
                  <GroupItems>
                    {g.items.map(([n, t, w]) => (
                      <SideItem key={n}><Pic n={n} /><Fit w={w}>{t}</Fit></SideItem>
                    ))}
                  </GroupItems>
                </Group>
              ))}
            </Groups>
            <VScroll>
              <svg width="8" height="5"><path d="M0 4.500h8L4 0z" fill="#808080" /></svg>
              <VThumb />
              <Spacer />
              <svg width="8" height="5"><path d="M0 0h8L4 4.500z" fill="#808080" /></svg>
            </VScroll>
          </SideBody>
        </Side>
      </Body>

      <Status><Fit w={263}>{"امروز: یکشنبه چهار اسفند 1398  شمسی  10:05:59"}</Fit></Status>

      <Taskbar>
        <TaskList>
          {tasks.map((t, i) => (
            <TaskButton key={i} $on={t.on}><TaskInner $run={t.run} $full={t.on}>{t.icon}</TaskInner></TaskButton>
          ))}
        </TaskList>
        <Spacer />
        <Tray>
          <AnyDesk />
          <LotusIcon />
          <S><path d="M4 14q-3 0-3-3t3-3q1-4 5-4t5 4q4 0 4 3t-3 3z" fill="#6f7378" /><path d="M2 2l14 14" stroke="#fff" strokeWidth="1.300" /></S>
          <S w={16}><path d="M5 4h11v10H5z" fill="#76b900" /><path d="M0 9q5-6 10-3 2 1 3 3-4 5-9 3-2-1-3-3zm4 0q3-3 6 0-3 3-6 0z" stroke="#3c6c08" fill="#76b900" /></S>
          <S w={16}><path d="M5 4h10v8H5zM10 12v3M7 15.500h7M1 3.500h4v4H1zM3 7.500v8h4" stroke="#fff" fill="none" strokeWidth="1.200" /></S>
          <S w={16}><path d="M1 7h2l4-4v11l-4-4H1z" stroke="#fff" fill="none" /><circle cx="12" cy="12.500" r="4.200" fill="#d13438" /><path d="M10.300 10.800l3.400 3.400M13.700 10.800l-3.400 3.400" stroke="#fff" /></S>
          <S w={16}><path d="M0 2h16v12h-5l-3 3-3-3H0z" fill="#fff" /><path d="M3 5.500h10M3 8h10M3 10.500h6" stroke="#111" /></S>
          <Lang><Fit w={9}>فا</Fit></Lang>
          <Clock><Fit w={48} dir="ltr" font={LATIN}>10:05 AM</Fit></Clock>
          <Divider $h={30} $c="#5b5d60" $m="0 0 0 -8px" />
        </Tray>
      </Taskbar>

      <Ring $x={790} $y={112} $w={110} $h={43} />
      <Ring $x={950} $y={143} $w={127} $h={60} />
    </App_>
  );
}
